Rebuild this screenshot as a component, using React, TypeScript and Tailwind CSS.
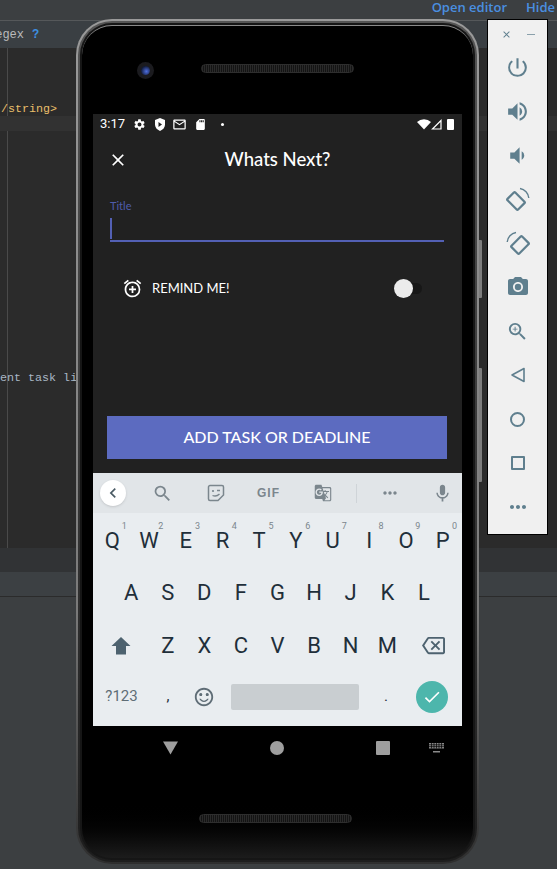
import {
  MdAddAlarm,
  MdCameraAlt,
  MdCheck,
  MdClose,
  MdGTranslate,
  MdKeyboardArrowLeft,
  MdMic,
  MdMoreHoriz,
  MdOutlineBackspace,
  MdOutlineEmail,
  MdPowerSettingsNew,
  MdSdCard,
  MdSearch,
  MdSentimentSatisfiedAlt,
  MdSettings,
  MdVolumeDown,
  MdVolumeUp,
  MdZoomIn,
} from "react-icons/md";

const rows = ["QWERTYUIOP", "ASDFGHJKL", "ZXCVBNM"];

// emulator rotate button, flip mirrors the arc to the other side
function RotateIcon({ flip }: { flip?: boolean }) {
  return (
    <svg width="24" height="24" viewBox="0 0 24 24" className={flip ? "-scale-x-100" : ""}>
      <rect x="4.5" y="6.5" width="11" height="15" rx="1" fill="none" stroke="#5f7f8e" strokeWidth="2.2" transform="rotate(-45 10 14)" />
      <path d="M14 1.5a10.5 10.5 0 0 1 8.8 9.5" fill="none" stroke="#5f7f8e" strokeWidth="1.4" />
    </svg>
  );
}

function Speaker() {
  return (
    <div className="h-[9px] w-[153px] rounded-full border border-[#2e2e2e] bg-[repeating-linear-gradient(90deg,#2a2a2a_0,#2a2a2a_1px,#141414_1px,#141414_2px)]" />
  );
}

function EmulatorToolbar() {
  return (
    <div className="absolute left-[487px] top-[19px] flex h-[516px] w-[61px] flex-col items-center border border-black bg-[#f0f0f0] text-[#5f7f8e]">
      <div className="flex h-[25px] w-full items-center justify-center gap-[15px] pt-1">
        <MdClose size={11} />
        <div className="h-[1.5px] w-[8px] bg-[#8aa0ab]" />
      </div>
      <div className="flex flex-col items-center">
        <div className="flex h-[44px] items-center"><MdPowerSettingsNew size={25} /></div>
        <div className="flex h-[44px] items-center"><MdVolumeUp size={25} /></div>
        <div className="flex h-[44px] items-center"><MdVolumeDown size={25} /></div>
        <div className="flex h-[44px] items-center"><RotateIcon /></div>
        <div className="flex h-[44px] items-center"><RotateIcon flip /></div>
        <div className="flex h-[44px] items-center"><MdCameraAlt size={24} /></div>
        <div className="flex h-[44px] items-center"><MdZoomIn size={23} /></div>
        <div className="flex h-[44px] items-center">
          <svg width="16" height="16" viewBox="0 0 16 16">
            <path d="M14 1.5v13L2 8z" fill="none" stroke="#5f7f8e" strokeWidth="1.6" strokeLinejoin="round" />
          </svg>
        </div>
        <div className="flex h-[44px] items-center">
          <div className="h-[15px] w-[15px] rounded-full border-2 border-[#5f7f8e]" />
        </div>
        <div className="flex h-[44px] items-center">
          <div className="h-[14px] w-[14px] rounded-[1px] border-2 border-[#5f7f8e]" />
        </div>
        <div className="flex h-[44px] items-center"><MdMoreHoriz size={24} /></div>
      </div>
    </div>
  );
}

function StatusBar() {
  return (
    <div className="flex h-[20px] shrink-0 items-center px-[7px] text-white">
      <span className="w-[33px] font-['Roboto',sans-serif] text-[13px]">3:17</span>
      <MdSettings size={13} />
      <svg width="12" height="13" viewBox="0 0 12 13" className="ml-[8px]">
        <path d="M6 0l5 2v4.500c0 3-2 5.200-5 6.500-3-1.300-5-3.500-5-6.500V2z" fill="#fff" />
        <path d="M4.500 4l3.500 2.500L4.500 9z" fill="#212121" />
      </svg>
      <MdOutlineEmail size={15} className="ml-[6px]" />
      <MdSdCard size={13} className="ml-[7px]" />
      <div className="ml-[14px] h-[3px] w-[3px] rounded-full bg-white" />
      <div className="flex-1" />
      <svg width="14" height="11" viewBox="0 0 14 11">
        <path d="M7 10.500L0 3a10.500 10.500 0 0 1 14 0z" fill="#fff" />
      </svg>
      <svg width="11" height="11" viewBox="0 0 11 11">
        <path d="M10 1.500V10H1.500z" fill="none" stroke="#fff" strokeWidth="1.200" />
      </svg>
      <div className="ml-[5px] h-[11px] w-[7px] rounded-[1px] bg-white" />
      <div className="w-[1px]" />
    </div>
  );
}

function TaskDialog() {
  return (
    <div className="flex h-[359px] shrink-0 flex-col bg-[#212121] font-['Lato',sans-serif] text-white">
      <StatusBar />
      <div className="relative flex h-[52px] items-center justify-center">
        <MdClose size={20} className="absolute left-[15px]" />
        <span className="text-[18.5px] font-medium">Whats Next?</span>
      </div>
      <div className="ml-[17px] mr-[18px] mt-[13px] flex flex-col">
        <span className="text-[11px] leading-[14px] text-[#4f5cab]">Title</span>
        <div className="mt-[4px] h-[25px] border-b-2 border-[#5360b4]">
          <div className="mt-[1px] h-[21px] w-[2px] bg-[#5360b4]" />
        </div>
      </div>
      <div className="ml-[29px] mr-[40px] mt-[36px] flex items-center">
        <MdAddAlarm size={21} />
        <span className="ml-[9px] text-[13px]">REMIND ME!</span>
        <div className="flex-1" />
        <div className="relative h-[11px] w-[28px] rounded-full bg-[#171717]">
          <div className="absolute left-0 top-[-4px] h-[19px] w-[19px] rounded-full bg-[#ececec]" />
        </div>
      </div>
      <div className="ml-[14px] mr-[15px] mt-[117px] flex h-[43px] items-center justify-center bg-[#5c6bc0] pb-[1px] text-[16px] font-medium">
        ADD TASK OR DEADLINE
      </div>
    </div>
  );
}

function Keyboard() {
  const key = "flex items-center justify-center font-['Roboto',sans-serif] text-[22px] text-[#1f2f3a]";
  return (
    <div className="flex h-[253px] shrink-0 flex-col bg-[#e9edf0]">
      {/* suggestion strip */}
      <div className="flex h-[40px] items-center bg-[#e1e5e8] pl-[7px] text-[#7b868d]">
        <div className="flex h-[26px] w-[26px] items-center justify-center rounded-full bg-white text-[#4a5a64] shadow-sm">
          <MdKeyboardArrowLeft size={20} />
        </div>
        <MdSearch size={21} className="ml-[26px]" />
        <svg width="18" height="18" viewBox="0 0 18 18" className="ml-[34px]">
          <path d="M3 1.500h12a1.500 1.500 0 0 1 1.500 1.500v8L11 16.500H3A1.500 1.500 0 0 1 1.500 15V3A1.500 1.500 0 0 1 3 1.500z" fill="none" stroke="#7b868d" strokeWidth="1.500" />
          <circle cx="6" cy="7" r="1.100" fill="#7b868d" />
          <path d="M10 6.500h3M5.500 11.500c2.500 1 5 .5 7-1.500" fill="none" stroke="#7b868d" strokeWidth="1.300" />
        </svg>
        <span className="ml-[32px] font-['Liberation_Sans',sans-serif] text-[12px] font-bold tracking-[1px]">GIF</span>
        <MdGTranslate size={18} className="ml-[34px]" />
        <div className="ml-[24px] h-[19px] w-px bg-[#cfd4d8]" />
        <MdMoreHoriz size={20} className="ml-[23px]" />
        <MdMic size={21} className="ml-[32px]" />
      </div>
      {/* letter rows */}
      <div className="grid h-[53px] grid-cols-10 px-[1px]">
        {rows[0].split("").map((k, i) => (
          <div key={k} className={`${key} relative pt-[2px]`}>
            {k}
            <span className="absolute right-[4px] top-[7px] text-[9px] text-[#7b868d]">{(i + 1) % 10}</span>
          </div>
        ))}
      </div>
      <div className="flex h-[53px] justify-center">
        {rows[1].split("").map((k) => (
          <div key={k} className={`${key} w-[36.600px]`}>{k}</div>
        ))}
      </div>
      <div className="flex h-[53px] items-center justify-center">
        <div className="flex w-[56px] items-center justify-center">
          <svg width="20" height="18" viewBox="0 0 20 18">
            <path d="M10 0l9.500 9H15v8.500H5V9H.500z" fill="#4d626f" />
          </svg>
        </div>
        {rows[2].split("").map((k) => (
          <div key={k} className={`${key} w-[36.600px]`}>{k}</div>
        ))}
        <div className="flex w-[56px] items-center justify-center text-[#4d626f]">
          <MdOutlineBackspace size={23} />
        </div>
      </div>
      <div className="flex h-[54px] items-center pb-[5px]">
        <div className="flex w-[57px] justify-center font-['Roboto',sans-serif] text-[15px] text-[#5f6d76]">?123</div>
        <div className="flex w-[36px] justify-center font-['Roboto',sans-serif] text-[15px] text-[#1f2f3a]">,</div>
        <MdSentimentSatisfiedAlt size={22} className="ml-[7px] text-[#5f6d76]" />
        <div className="ml-[16px] h-[26px] w-[128px] rounded-[2px] bg-[#c9ced1]" />
        <div className="flex w-[54px] justify-center font-['Roboto',sans-serif] text-[15px] text-[#1f2f3a]">.</div>
        <div className="ml-[3px] flex h-[32px] w-[32px] items-center justify-center rounded-full bg-[#4db6ac] text-white">
          <MdCheck size={20} />
        </div>
      </div>
    </div>
  );
}

function NavBar() {
  return (
    <div className="flex h-[44px] shrink-0 items-center bg-black">
      <svg width="15" height="14" viewBox="0 0 15 14" className="ml-[70px]">
        <path d="M0 .500h15L7.500 13.500z" fill="#9e9e9e" />
      </svg>
      <div className="ml-[92px] h-[14px] w-[14px] rounded-full bg-[#9e9e9e]" />
      <div className="ml-[92px] h-[14px] w-[14px] rounded-[1px] bg-[#9e9e9e]" />
      <svg width="15" height="10" viewBox="0 0 15 10" className="ml-[39px]">
        <path d="M0 0h15v5.500H0zM4 8h7v1.500H4z" fill="#8a8a8a" />
        <path d="M0 1.800h15M0 3.600h15M2.500 0v5.500M5 0v5.500M7.500 0v5.500M10 0v5.500M12.500 0v5.500" stroke="#000" strokeWidth=".7" />
      </svg>
    </div>
  );
}

function Phone() {
  return (
    <div className="absolute left-[76px] top-[19px] h-[845px] w-[403px]">
      {/* side buttons */}
      <div className="absolute right-[-3px] top-[221px] h-[58px] w-[3px] rounded-r-[1px] bg-[#7d7d7d]" />
      <div className="absolute right-[-3px] top-[349px] h-[114px] w-[3px] rounded-r-[1px] bg-[#7d7d7d]" />
      <div className="relative h-full rounded-[36px] bg-gradient-to-b from-[#9a9a9a] via-[#7a7a7a] via-70% to-[#2e2e2e] p-[2px]">
        <div className="h-full rounded-[34px] bg-gradient-to-b from-[#555555] to-[#1e1e1e] p-[2px]">
          <div className="h-full rounded-[32px] bg-[#161616] p-[2px]">
            <div className="flex h-full flex-col overflow-hidden rounded-[30px] border-t border-t-[#8a8a8a] bg-gradient-to-b from-black from-93% to-[#1c1c1c] px-[11px]">
              <div className="relative flex h-[88px] shrink-0 justify-center pt-[38px]">
                <div className="absolute left-[44px] top-[36px] flex h-[17px] w-[17px] items-center justify-center rounded-full bg-[#1b1b1f]">
                  <div className="h-[9px] w-[9px] rounded-full bg-[radial-gradient(circle_at_60%_60%,#4f6fe0,#101a3a_70%)]" />
                </div>
                <Speaker />
              </div>
              <TaskDialog />
              <Keyboard />
              <NavBar />
              <div className="flex justify-center pr-[4px] pt-[44px]">
                <Speaker />
              </div>
            </div>
          </div>
        </div>
      </div>
    </div>
  );
}

function IdeBackground() {
  return (
    <div className="flex h-full flex-col bg-[#3c3f41]">
      <div className="flex h-[20px] justify-end gap-[19px] overflow-hidden whitespace-nowrap font-['Open_Sans',sans-serif] text-[13px] font-semibold leading-[14px] text-[#4a8fe0]">
        <span>Open editor</span>
        <span className="w-[31px]">Hide</span>
      </div>
      <div className="flex h-[28px] items-center gap-[8px] border-t border-[#55585a] bg-[#3a3f43] font-['Liberation_Mono',monospace] text-[12px] text-[#bbbbbb]">
        <span className="-ml-[12px]">Regex</span>
        <span className="font-bold text-[#3d8fe0]">?</span>
      </div>
      <div className="h-[500px] bg-[#2b2b2b] font-['Liberation_Mono',monospace] text-[11.7px]">
        <div className="ml-[7px] h-full border-l border-[#4a4a4a]">
          <div className="-ml-[7px] pt-[54px] leading-[15px] text-[#e8bf6a]">/string&gt;</div>
          <div className="-ml-[8px] -mt-[1px] h-[15px] bg-[#323232]" />
          <div className="-ml-[8px] mt-[240px] leading-[15px] text-[#a9b7c6]">ent task li</div>
        </div>
      </div>
      <div className="h-[24px] bg-[#313335]" />
      <div className="h-[25px] border-b border-[#2b2b2b] bg-[#3c4043]" />
    </div>
  );
}

export default function App() {
  return (
    <div className="relative h-[869px] w-[557px] overflow-hidden">
      <IdeBackground />
      <Phone />
      <EmulatorToolbar />
    </div>
  );
}
